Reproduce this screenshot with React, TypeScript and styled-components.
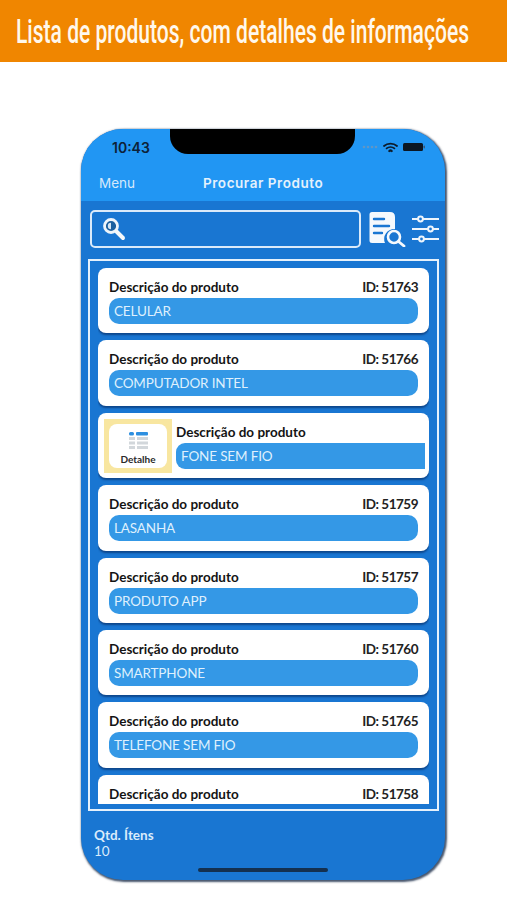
import React, { FunctionComponent } from 'react'
import styled, { createGlobalStyle } from 'styled-components'

const GlobalStyle = createGlobalStyle`
    html, body {
        margin : 0;
        padding : 0;
        background : white;
    }
    #root {
        width : 507px;
        height : 900px;
        overflow : hidden;
    }
`

const products = [
    { id : 51763, name : 'CELULAR' },
    { id : 51766, name : 'COMPUTADOR INTEL' },
    { id : 51767, name : 'FONE SEM FIO', swiped : true },
    { id : 51759, name : 'LASANHA' },
    { id : 51757, name : 'PRODUTO APP' },
    { id : 51760, name : 'SMARTPHONE' },
    { id : 51765, name : 'TELEFONE SEM FIO' },
    { id : 51758 }
]

const Page = styled.div`
    display : flex;
    flex-direction : column;
    width : 507px;
    height : 900px;
    background : white;
`

const Banner = styled.div`
    height : 62px;
    flex-shrink : 0;
    display : flex;
    align-items : center;
    padding-left : 16px;
    overflow : hidden;
    background : #f08600;
`

const BannerText = styled.h1`
    margin : 0;
    width : 452px;
    font-family : Roboto, sans-serif;
    font-size : 33px;
    font-weight : 500;
    color : #fff8ec;
    white-space : nowrap;
    transform : scaleX(.638);
    transform-origin : left center;
`

const Phone = styled.div`
    position : relative;
    display : flex;
    flex-direction : column;
    width : 364px;
    height : 751px;
    margin : 67px 0 0 81px;
    border-radius : 42px;
    overflow : hidden;
    background : #1976d2;
    box-shadow : 1px 1px 2px 1px rgba(10, 30, 60, .75);
    font-family : Lato, sans-serif;
`

const Notch = styled.div`
    position : absolute;
    top : 0;
    left : 89px;
    width : 185px;
    height : 25px;
    background : black;
    border-radius : 0 0 18px 18px;
`

const TopBar = styled.div`
    height : 72px;
    flex-shrink : 0;
    background : #2196f3;
`

const StatusRow = styled.div`
    height : 36px;
    display : flex;
    align-items : center;
    justify-content : space-between;
    padding : 0 20px 0 31px;
    box-sizing : border-box;
    font-family : Inter, sans-serif;
    font-size : 14px;
    font-weight : 600;
    color : #0d2238;
`

const StatusIcons = styled.div`
    display : flex;
    align-items : center;
    gap : 5px;
`

const NavRow = styled.div`
    height : 36px;
    display : grid;
    grid-template-columns : 104px auto;
    align-items : center;
    padding-left : 18px;
    font-family : Inter, sans-serif;
    font-size : 13.5px;
    color : #d5e9fb;
`

const NavTitle = styled.span`
    font-weight : 600;
    letter-spacing : .55px;
    color : #e4f1fc;
`

const SearchRow = styled.div`
    height : 58px;
    flex-shrink : 0;
    display : flex;
    align-items : center;
    padding : 0 0 2px 9px;
    box-sizing : border-box;
`

const SearchBox = styled.div`
    width : 271px;
    height : 38px;
    box-sizing : border-box;
    display : flex;
    align-items : center;
    padding-left : 9px;
    border : 2px solid #dbeafa;
    border-radius : 5px;
`

const SearchTools = styled.div`
    display : flex;
    align-items : center;
    gap : 6px;
    margin-left : 8px;
`

const ListFrame = styled.div`
    display : flex;
    height : 552px;
    box-sizing : border-box;
    margin : 0 6px 0 7px;
    padding : 7px 8px 5px;
    flex-shrink : 0;
    border : 2px solid #e6f1fc;
`

const ListScroll = styled.div`
    flex : 1;
    min-width : 0;
    display : flex;
    flex-direction : column;
    gap : 7px;
    overflow : hidden;
`

const Card = styled.div`
    flex-shrink : 0;
    height : 65.4px;
    box-sizing : border-box;
    display : flex;
    background : white;
    border-radius : 8px;
    box-shadow : 0 2px 2px rgba(8, 50, 110, .7);
`

const CardBody = styled.div`
    flex : 1;
    min-width : 0;
    padding : 8px 11px 0;
`

const CardHead = styled.div`
    display : flex;
    justify-content : space-between;
    align-items : center;
    height : 22px;
    font-size : 13.5px;
    font-weight : 700;
    color : #141414;
`

const CardId = styled.span`
    font-size : 13.5px;
    font-weight : 700;
    letter-spacing : -.5px;
    color : #222;
`

const NameBar = styled.div<{ $swiped? : boolean }>`
    height : 26px;
    display : flex;
    align-items : center;
    padding-left : 5px;
    background : #3498e6;
    border-radius : ${props => props.$swiped ? '9px 0 0 9px' : '10px'};
    font-size : 13.5px;
    letter-spacing : -.15px;
    color : #dff0fd;
`

const DetailAction = styled.div`
    width : 68px;
    height : 54px;
    flex-shrink : 0;
    box-sizing : border-box;
    margin : 6px 0 0 6px;
    padding : 5px;
    background : #f8e6a0;
`

const DetailButton = styled.div`
    height : 44px;
    display : flex;
    flex-direction : column;
    align-items : center;
    justify-content : flex-end;
    gap : 4px;
    padding-bottom : 3px;
    box-sizing : border-box;
    background : white;
    border-radius : 8px;
    font-size : 10px;
    font-weight : 700;
    color : #2a2a2a;
`

const SwipedBody = styled.div`
    flex : 1;
    min-width : 0;
    padding : 8px 4px 0 4px;
`

const Footer = styled.div`
    flex : 1;
    padding : 16px 0 0 13px;
    font-size : 13.5px;
    line-height : 16px;
    color : #d9ebfb;
`

const FooterLabel = styled.div`
    font-weight : 700;
`

const HomeBar = styled.div`
    position : absolute;
    left : 117px;
    bottom : 8px;
    width : 130px;
    height : 4px;
    border-radius : 2px;
    background : #14304f;
`

const WifiIcon = () => (
    <svg width="15" height="11" viewBox="0 0 15 11" fill="none" stroke="#0d1c2c" strokeLinecap="round">
        <path d="M1 4 C4.5 .8 10.5 .8 14 4" strokeWidth="1.8" />
        <path d="M3.6 6.4 C5.8 4.6 9.2 4.6 11.4 6.4" strokeWidth="1.8" />
        <path d="M6.3 9 C7 8.4 8 8.4 8.7 9" strokeWidth="2.2" />
    </svg>
)

const BatteryIcon = () => (
    <svg width="22" height="8" viewBox="0 0 22 8">
        <rect x="0" y="0" width="20" height="8" rx="1.5" fill="#0b1622" />
        <rect x="20.5" y="2.5" width="1.5" height="3" rx=".7" fill="#3a5a7a" />
    </svg>
)

const SignalDots = () => (
    <svg width="16" height="4" viewBox="0 0 16 4" fill="#5f96c6">
        <circle cx="2" cy="2" r="1.3" />
        <circle cx="6" cy="2" r="1.3" />
        <circle cx="10" cy="2" r="1.3" />
        <circle cx="14" cy="2" r="1.3" />
    </svg>
)

const MagnifierIcon = () => (
    <svg width="26" height="26" viewBox="0 0 26 26" fill="none">
        <circle cx="10" cy="10" r="6.5" fill="#1b5f9f" stroke="#eef4fa" strokeWidth="2.8" />
        <path d="M10 6.8 A3.2 3.2 0 0 0 10 13.2 Z" fill="#d7e6f4" />
        <path d="M15.5 15.5 L22 22" stroke="#f4f7fa" strokeWidth="4" strokeLinecap="round" />
    </svg>
)

const DocSearchIcon = () => (
    <svg width="37" height="36" viewBox="0 0 37 36" fill="none">
        <path d="M3 1 H21 Q26 1 26 6 V18 A10 10 0 0 0 16 32 H3 Q0.5 32 0.5 29.5 V3.5 Q0.5 1 3 1 Z" fill="#f5f9fd" />
        <path d="M5 8 H15 M5 15 H20 M5 22 H13" stroke="#1976d2" strokeWidth="2.4" strokeLinecap="round" />
        <circle cx="25" cy="26" r="6" stroke="#f5f9fd" strokeWidth="2.6" />
        <path d="M29.5 30.5 L35 35" stroke="#f5f9fd" strokeWidth="2.8" strokeLinecap="round" />
    </svg>
)

const SlidersIcon = () => (
    <svg width="27" height="28" viewBox="0 0 27 28" fill="none" stroke="#eef5fc" strokeWidth="2">
        <path d="M0 4 H6 M11 4 H27 M0 14 H16 M21 14 H27 M0 24 H7 M12 24 H27" />
        <circle cx="8.5" cy="4" r="2.4" />
        <circle cx="18.5" cy="14" r="2.4" />
        <circle cx="9.5" cy="24" r="2.4" />
    </svg>
)

const DetailIcon = () => (
    <svg width="19" height="17" viewBox="0 0 19 17">
        <rect x="0" y="0" width="5" height="3.5" rx="1.5" fill="#2d8fe0" />
        <rect x="7" y="0" width="12" height="3.5" rx="1" fill="#2d8fe0" />
        <rect x="0" y="5" width="6" height="3" fill="#d2d7db" />
        <rect x="0" y="9.5" width="6" height="3" fill="#d2d7db" />
        <rect x="0" y="14" width="6" height="3" fill="#d2d7db" />
        <rect x="8" y="5" width="11" height="3" fill="#d2d7db" />
        <rect x="8" y="9.5" width="11" height="3" fill="#d2d7db" />
        <rect x="8" y="14" width="11" height="3" fill="#d2d7db" />
    </svg>
)

interface ProductProps {
    id : number
    name? : string
    swiped? : boolean
}

const ProductCard : FunctionComponent<ProductProps> = ({ id, name, swiped }) => {
    if (swiped) {
        return (
            <Card>
                <DetailAction>
                    <DetailButton>
                        <DetailIcon />
                        Detalhe
                    </DetailButton>
                </DetailAction>
                <SwipedBody>
                    <CardHead>Descrição do produto</CardHead>
                    <NameBar $swiped>{name}</NameBar>
                </SwipedBody>
            </Card>
        )
    }

    return (
        <Card>
            <CardBody>
                <CardHead>
                    <span>Descrição do produto</span>
                    <CardId>ID: {id}</CardId>
                </CardHead>
                {name && <NameBar>{name}</NameBar>}
            </CardBody>
        </Card>
    )
}

const App : FunctionComponent = () => {
    return (
        <Page>
            <GlobalStyle />
            <Banner>
                <BannerText>Lista de produtos, com detalhes de informações</BannerText>
            </Banner>
            <Phone>
                <TopBar>
                    <StatusRow>
                        <span>10:43</span>
                        <StatusIcons>
                            <SignalDots />
                            <WifiIcon />
                            <BatteryIcon />
                        </StatusIcons>
                    </StatusRow>
                    <NavRow>
                        <span>Menu</span>
                        <NavTitle>Procurar Produto</NavTitle>
                    </NavRow>
                </TopBar>
                <SearchRow>
                    <SearchBox>
                        <MagnifierIcon />
                    </SearchBox>
                    <SearchTools>
                        <DocSearchIcon />
                        <SlidersIcon />
                    </SearchTools>
                </SearchRow>
                <ListFrame>
                    <ListScroll>
                        {products.map(p => <ProductCard key={p.id} {...p} />)}
                    </ListScroll>
                </ListFrame>
                <Footer>
                    <FooterLabel>Qtd. Ítens</FooterLabel>
                    <div>10</div>
                </Footer>
                <Notch />
                <HomeBar />
            </Phone>
        </Page>
    )
}

export default App
